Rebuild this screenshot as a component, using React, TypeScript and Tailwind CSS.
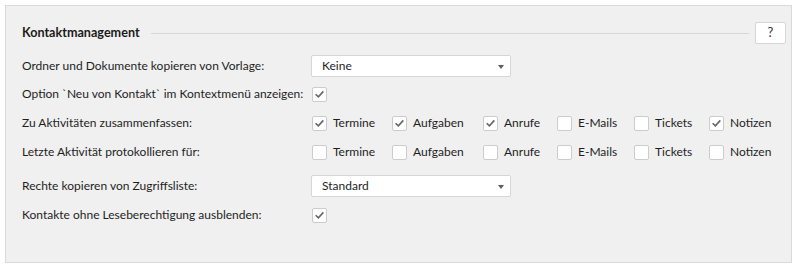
import React from "react";

function Check({ checked }: { checked?: boolean }) {
  return (
    <span className="flex h-[15px] w-[15px] shrink-0 items-center justify-center rounded-[2px] border border-[#cccccc] bg-white">
      {checked && (
        <svg width="11" height="11" viewBox="0 0 11 11">
          <path d="M2.2 5.8 L4.4 7.9 L8.8 3" fill="none" stroke="#666666" strokeWidth="1.6" strokeLinecap="square" strokeLinejoin="miter" />
        </svg>
      )}
    </span>
  );
}

function Select({ value }: { value: string }) {
  return (
    <div className="-ml-px flex h-[22px] w-[200px] items-center justify-between rounded-[2px] border border-[#d6d6d6] bg-white pl-[10px] pr-[6px]">
      <span>{value}</span>
      <span className="mt-px h-0 w-0 border-l-[3.5px] border-r-[3.5px] border-t-[4px] border-l-transparent border-r-transparent border-t-[#606060]" />
    </div>
  );
}

const items = ["Termine", "Aufgaben", "Anrufe", "E-Mails", "Tickets", "Notizen"];

function Options({ checked }: { checked: boolean[] }) {
  return (
    <div className="grid grid-cols-[80px_91px_74px_77px_75px_auto]">
      {items.map((it, i) => (
        <label key={it} className="flex items-center gap-[6px]">
          <Check checked={checked[i]} />
          <span>{it}</span>
        </label>
      ))}
    </div>
  );
}

function Row({ label, children, className }: { label: string; children: React.ReactNode; className: string }) {
  return (
    <div className={`flex h-[22px] items-center ${className}`}>
      <div className="w-[290px] shrink-0">{label}</div>
      {children}
    </div>
  );
}

export default function App() {
  return (
    <div className="h-[268px] w-[797px] bg-white p-[5px] font-['Lato',sans-serif] text-[12px] text-[#1e1e1e]">
      <div className="h-[258px] w-[787px] border border-[#d9d9d9] bg-[#f0f0f0] pl-4 pr-[5px] pt-4">
        <div className="flex h-[22px] items-center">
          <div className="text-[12.6px] font-bold text-[#1a1a1a]">Kontaktmanagement</div>
          <div className="ml-[11px] mr-[6px] h-px flex-1 bg-[#d7d7d7]" />
          <button className="flex h-[22px] w-[31px] items-center justify-center rounded-[2px] border border-[#d6d6d6] bg-white text-[13px] text-[#333333]">
            ?
          </button>
        </div>
        <Row label="Ordner und Dokumente kopieren von Vorlage:" className="mt-[11px]">
          <Select value="Keine" />
        </Row>
        <Row label="Option `Neu von Kontakt` im Kontextmenü anzeigen:" className="mt-[6px]">
          <Check checked />
        </Row>
        <Row label="Zu Aktivitäten zusammenfassen:" className="mt-[7px]">
          <Options checked={[true, true, true, false, false, true]} />
        </Row>
        <Row label="Letzte Aktivität protokollieren für:" className="mt-[7px]">
          <Options checked={[false, false, false, false, false, false]} />
        </Row>
        <Row label="Rechte kopieren von Zugriffsliste:" className="mt-[12px]">
          <Select value="Standard" />
        </Row>
        <Row label="Kontakte ohne Leseberechtigung ausblenden:" className="mt-[7px]">
          <Check checked />
        </Row>
      </div>
    </div>
  );
}
